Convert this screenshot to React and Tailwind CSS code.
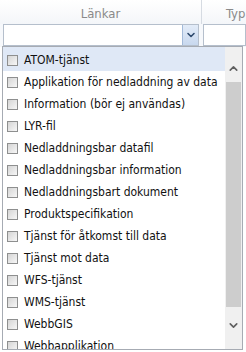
import { ChevronDown, ChevronUp } from "lucide-react";

const items = [
  "ATOM-tjänst",
  "Applikation för nedladdning av data",
  "Information (bör ej användas)",
  "LYR-fil",
  "Nedladdningsbar datafil",
  "Nedladdningsbar information",
  "Nedladdningsbart dokument",
  "Produktspecifikation",
  "Tjänst för åtkomst till data",
  "Tjänst mot data",
  "WFS-tjänst",
  "WMS-tjänst",
  "WebbGIS",
  "Webbapplikation",
];

function Box() {
  return (
    <span className="h-[11px] w-[11px] shrink-0 border border-[#8e8f8f] bg-gradient-to-br from-[#d5d5d5] to-[#f7f7f7]" />
  );
}

export default function App() {
  return (
    <div className="relative h-[352px] w-[246px] overflow-hidden bg-white font-['DejaVu_Sans_Condensed','DejaVu_Sans',sans-serif] text-[12px] text-[#111]">
      {/* column headers */}
      <div className="flex h-[24px] bg-gradient-to-b from-[#ffffff] to-[#f4f6f9] text-[13px] text-[#8a8a8a]">
        <div className="flex w-[202px] items-center justify-center border-r border-[#d6dbe2] pt-[3px]">Länkar</div>
        <div className="flex items-center pl-[24px] pt-[3px]">Typ</div>
      </div>

      {/* filter row */}
      <div className="flex h-[23px] items-start bg-[#f6f8fb] pl-[3px]">
        <div className="flex h-[22px] w-[196px] border border-[#b5bfcc] bg-white">
          <div className="flex-1" />
          <div className="flex w-[16px] items-center justify-center border-l border-[#a3bad9] bg-gradient-to-b from-[#e3ecf8] to-[#c8d8ee]">
            <ChevronDown size={12} strokeWidth={3.2} className="text-[#2e4a6e]" />
          </div>
        </div>
        <div className="ml-[4px] h-[22px] flex-1 border border-[#b5bfcc] bg-white" />
      </div>

      {/* dropdown list */}
      <div className="absolute left-[2px] top-[46px] flex h-[304px] w-[241px] border border-[#a6abb3] bg-white">
        <div className="flex-1 overflow-hidden">
          {items.map((item, i) => (
            <div
              key={item}
              className={`flex items-center gap-[6px] pl-[4px] whitespace-nowrap ${
                i === 0 ? "h-[24px] pt-[2px] bg-[#dfe8f6]" : "h-[22px]"
              }`}
            >
              <Box />
              <span>{item}</span>
            </div>
          ))}
        </div>
        <div className="flex w-[17px] flex-col bg-[#f0f0f0]">
          <div className="mt-[13px] flex h-[17px] items-center justify-center">
            <ChevronUp size={13} strokeWidth={3} className="text-[#606060]" />
          </div>
          <div className="mx-[1px] mt-[5px] h-[225px] bg-[#cdcdcd]" />
          <div className="mt-[10px] flex h-[17px] items-center justify-center">
            <ChevronDown size={13} strokeWidth={3} className="text-[#606060]" />
          </div>
          <div className="flex-1" />
        </div>
      </div>
    </div>
  );
}
